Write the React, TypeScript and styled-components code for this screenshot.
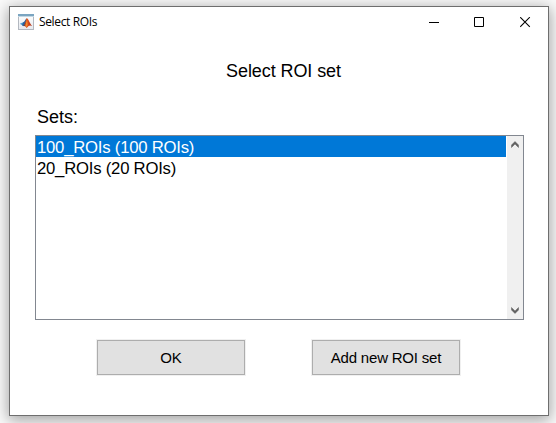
import React from "react";
import styled, { createGlobalStyle } from "styled-components";

const GlobalStyle = createGlobalStyle`
  *, *::before, *::after { box-sizing: border-box; }
  html, body { margin: 0; height: 100%; overflow: hidden; background: #f8f8f8; }
  body { font-family: "Liberation Sans", Arial, sans-serif; color: #000; }
`;

const Desktop = styled.main`
  width: 556px;
  height: 423px;
  padding: 6px 7px 7px 9px;
  overflow: hidden;
  background: #fafafa;
`;

const Window = styled.section`
  display: flex;
  flex-direction: column;
  width: 540px;
  height: 410px;
  background: #fff;
  border: 1px solid #6e6e6e;
  box-shadow: 0 3px 14px 1px rgba(0, 0, 0, 0.36);
`;

const TitleBar = styled.header`
  display: flex;
  align-items: center;
  height: 30px;
  padding-left: 8px;
  flex: none;
`;

const Title = styled.h1`
  flex: 1;
  margin: 0 0 0 5px;
  font: 400 12px/16px "Open Sans", sans-serif;
  letter-spacing: -0.35px;
`;

const CaptionButton = styled.button`
  display: grid;
  place-items: center;
  width: 45px;
  height: 30px;
  padding: 0;
  border: 0;
  background: transparent;

  &:last-child {
    width: 47px;
  }
`;

const CaptionButtons = styled.div`
  display: flex;
  margin-right: -1px;
`;

const Content = styled.div`
  display: flex;
  flex-direction: column;
  padding: 23px 24px 0 25px;
`;

const Heading = styled.h2`
  margin: 0 0 0 8px;
  font-size: 18px;
  font-weight: 400;
  line-height: 22px;
  letter-spacing: -0.08px;
  text-align: center;
`;

const Label = styled.label`
  margin: 24px 0 7px 2px;
  font-size: 18px;
  line-height: 22px;
`;

const ListBox = styled.div`
  display: flex;
  width: 489px;
  height: 185px;
  border: 1px solid #828790;
`;

const Options = styled.div`
  flex: 1;
  margin-right: 1px;
`;

const Option = styled.div<{ $selected?: boolean }>`
  height: 21px;
  padding: 1px 0 0 1px;
  font-size: 16.7px;
  line-height: 21px;
  letter-spacing: -0.22px;
  white-space: pre;
  background: ${(p) => (p.$selected ? "#0078d7" : "transparent")};
  color: ${(p) => (p.$selected ? "#fff" : "#000")};
`;

const ScrollBar = styled.div`
  display: flex;
  flex-direction: column;
  justify-content: space-between;
  width: 16px;
  background: #f0f0f0;
`;

const ScrollArrow = styled.div`
  display: grid;
  place-items: center;
  height: 17px;
`;

const Actions = styled.div`
  display: flex;
  gap: 67px;
  margin: 20px 0 0 62px;
`;

const Button = styled.button`
  width: 148px;
  height: 35px;
  padding: 1px 0 0;
  font: 400 15px/18px "Liberation Sans", Arial, sans-serif;
  letter-spacing: -0.2px;
  color: #000;
  background: #e1e1e1;
  border: 1px solid #adadad;
  box-shadow: 0 0 0 1px #f0f0f0;
`;

const AppIcon = () => (
  <svg width="16" height="16" viewBox="0 0 16 16">
    <defs>
      <linearGradient id="frame" x1="0" y1="0" x2="0" y2="1">
        <stop offset="0" stopColor="#fff" />
        <stop offset="1" stopColor="#e6e9ee" />
      </linearGradient>
      <linearGradient id="peak" x1="0" y1="0" x2="1" y2="0">
        <stop offset="0" stopColor="#7c2a20" />
        <stop offset="0.45" stopColor="#e1511c" />
        <stop offset="1" stopColor="#a32d18" />
      </linearGradient>
    </defs>
    <rect x="0.5" y="0.5" width="15" height="15" fill="url(#frame)" stroke="#b3b8c0" />
    <rect width="16" height="2" fill="#7ba5c1" />
    <rect y="2" width="16" height="1" fill="#c3d8e4" />
    <path d="M1.8 9.8 5.2 8.2 7.2 9.5 5.4 12Z" fill="#4a9bd0" />
    <path d="M5.2 8.2C6.6 8 7 5.6 8.6 4.2L7.4 10 5.4 12.2 4 11.2Z" fill="#2d629a" />
    <path d="M8.8 3.9C10.4 4.6 11.6 9 14.2 12.3 12.3 10.9 11.1 11 8.6 14 7.8 12.6 7 11.6 5.4 12.1 7.5 9.8 7.5 5.8 8.8 3.9Z" fill="url(#peak)" />
    <path d="M9 5.2 9.7 10.7 8.6 13.2 7.3 11.4Z" fill="#f18b2c" />
  </svg>
);

const Arrow = ({ down = false }: { down?: boolean }) => (
  <svg width="8" height="7" viewBox="0 0 8 7">
    <path
      d={down ? "M.5 .5 4 4 7.5 .5V3L4 6.5 .5 3Z" : "M.5 6.5 4 3 7.5 6.5V4L4 .5 .5 4Z"}
      fill="#606060"
      stroke="#606060"
      strokeWidth="0.5"
    />
  </svg>
);

export default function App() {
  return (
    <>
      <GlobalStyle />
      <Desktop>
        <Window>
          <TitleBar>
            <AppIcon />
            <Title>Select ROIs</Title>
            <CaptionButtons>
              <CaptionButton aria-label="Minimize">
                <svg width="11" height="11" viewBox="0 0 11 11">
                  <path d="M0 5.5H10" stroke="#000" />
                </svg>
              </CaptionButton>
              <CaptionButton aria-label="Maximize">
                <svg width="11" height="11" viewBox="0 0 11 11">
                  <path d="M.5.5H9.5V9.5H.5Z" fill="none" stroke="#000" />
                </svg>
              </CaptionButton>
              <CaptionButton aria-label="Close">
                <svg width="11" height="11" viewBox="0 0 11 11">
                  <path d="M.2.2 9.8 9.8M9.8.2.2 9.8" stroke="#000" strokeWidth="1.1" />
                </svg>
              </CaptionButton>
            </CaptionButtons>
          </TitleBar>
          <Content>
            <Heading>Select ROI set</Heading>
            <Label>Sets:</Label>
            <ListBox>
              <Options>
                <Option $selected>100_ROIs (100 ROIs)</Option>
                <Option>20_ROIs (20 ROIs)</Option>
              </Options>
              <ScrollBar>
                <ScrollArrow>
                  <Arrow />
                </ScrollArrow>
                <ScrollArrow>
                  <Arrow down />
                </ScrollArrow>
              </ScrollBar>
            </ListBox>
            <Actions>
              <Button>OK</Button>
              <Button>Add new ROI set</Button>
            </Actions>
          </Content>
        </Window>
      </Desktop>
    </>
  );
}
